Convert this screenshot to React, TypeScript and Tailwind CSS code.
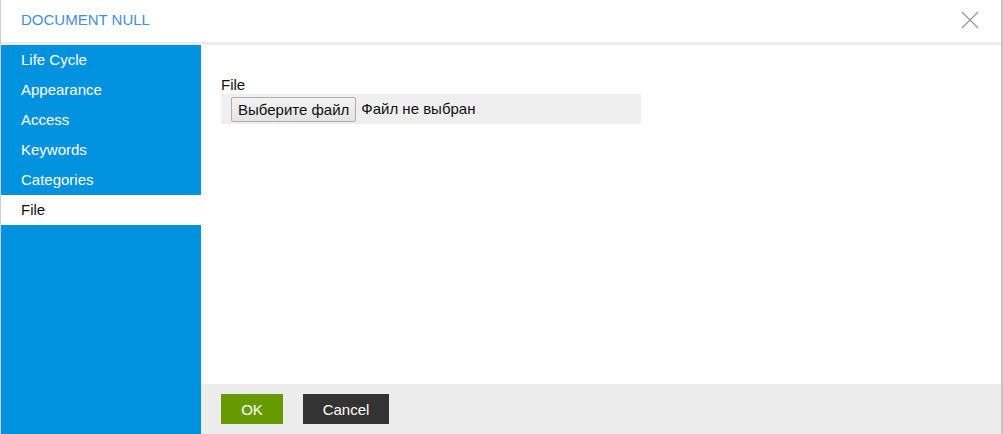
import React, { useState } from 'react';

const tabs = ['Life Cycle', 'Appearance', 'Access', 'Keywords', 'Categories', 'File'];

const CloseIcon: React.FC = () => (
  <svg width="18" height="18" viewBox="0 0 18 18" fill="none">
    <path d="M1 1L17 17M17 1L1 17" stroke="#9a9a9a" strokeWidth="1.3" />
  </svg>
);

export default function App() {
  const [activeTab, setActiveTab] = useState('File');

  return (
    <div className="w-[1003px] h-[434px] flex flex-col bg-white border-l border-[#cfcfcf] border-r-2 border-r-[#c4c4c4] font-['Liberation_Sans',Arial,sans-serif] text-[15px] overflow-hidden">
      {/* Header */}
      <div className="h-[45px] shrink-0 flex items-center justify-between pl-5 pr-[22px] border-b-[3px] border-[#ececec]">
        <span className="text-[#3d8fe0] text-[15px] pb-[2px]">DOCUMENT NULL</span>
        <button className="pb-[2px]">
          <CloseIcon />
        </button>
      </div>

      <div className="flex flex-1 min-h-0">
        {/* Sidebar */}
        <div className="w-[200px] shrink-0 bg-[#0092de] flex flex-col">
          {tabs.map((tab) => (
            <button
              key={tab}
              onClick={() => setActiveTab(tab)}
              className={`h-[30px] text-left px-5 text-[15px] ${
                activeTab === tab ? 'bg-white text-[#111]' : 'text-white'
              }`}
            >
              {tab}
            </button>
          ))}
        </div>

        {/* Main */}
        <div className="flex-1 flex flex-col">
          <div className="flex-1 pt-[30px] px-5">
            <div className="text-[#111] leading-[19px]">File</div>
            <div className="w-[420px] h-[30px] bg-[#efefef] flex items-center pl-[10px] gap-[5px]">
              <button className="h-[25px] px-[6px] border border-[#adadad] rounded-[2px] bg-gradient-to-b from-[#f3f3f3] to-[#e4e4e4] text-[#111] text-[15px] leading-none">
                Выберите файл
              </button>
              <span className="text-[#111]">Файл не выбран</span>
            </div>
          </div>

          {/* Footer */}
          <div className="h-[50px] shrink-0 bg-[#ececec] flex items-center px-5 gap-5">
            <button className="w-[62px] h-[30px] pt-[2px] bg-[#669a00] text-white text-[15px]">OK</button>
            <button className="w-[86px] h-[30px] pt-[2px] bg-[#333333] text-white text-[15px]">Cancel</button>
          </div>
        </div>
      </div>
    </div>
  );
}
